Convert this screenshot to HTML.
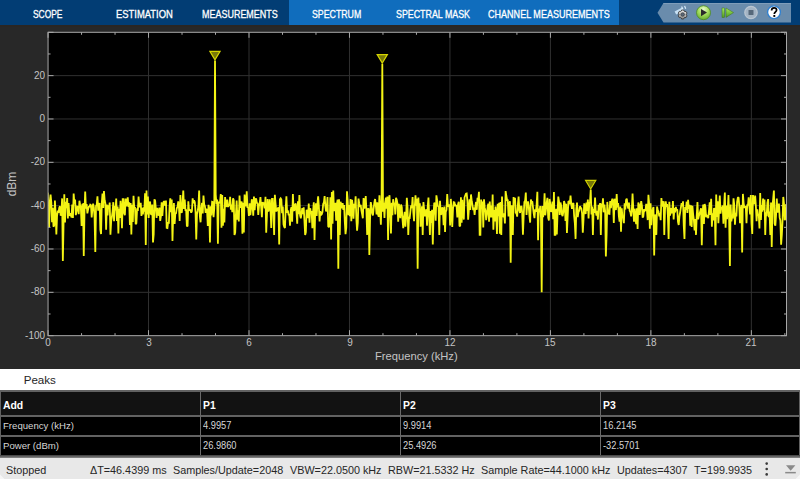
<!DOCTYPE html>
<html><head><meta charset="utf-8">
<style>
*{margin:0;padding:0;box-sizing:border-box}
html,body{width:800px;height:479px;overflow:hidden;background:#282828;font-family:"Liberation Sans",sans-serif}
.abs{position:absolute}
#tb{position:absolute;left:0;top:0;width:800px;height:25px;background:#023d74}
#tbsel{position:absolute;left:289px;top:0;width:330px;height:25px;background:#106dbd}
.tab{position:absolute;top:7px;height:14px;line-height:14px;color:#fff;font-size:10.6px;-webkit-text-stroke:0.3px #fff;white-space:nowrap;transform-origin:0 50%}
#strip{position:absolute;left:0;top:25px;width:800px;height:2px;background:#2a2623}
#plot{position:absolute;left:0;top:27px;width:800px;height:342px;background:#282828}
.yl{position:absolute;left:0;width:45px;text-align:right;font-size:11.3px;line-height:14px;color:#c4c4c4;transform:scaleX(0.88);transform-origin:100% 50%}
.xl{position:absolute;top:336px;width:30px;text-align:center;font-size:11.3px;line-height:12px;color:#c4c4c4;transform:scaleX(0.88)}
#peaks{position:absolute;left:0;top:369px;width:800px;height:22px;background:#fff}
.th{position:absolute;top:398.5px;color:#fff;font-weight:bold;font-size:10.4px;line-height:14px;white-space:nowrap}
.td{position:absolute;color:#d6d6d6;font-size:9.6px;line-height:12px;white-space:nowrap}
.r2{top:420px} .r3{top:440px}
.dg{display:inline-block;font-size:10.3px;transform:scaleX(0.9);transform-origin:0 50%;position:relative;top:-0.5px}
#status{position:absolute;left:0;top:458px;width:800px;height:21px;background:#e8e8e8}
.st{position:absolute;top:5px;font-size:10.8px;line-height:14px;color:#262626;white-space:nowrap}
</style></head><body>
<div id="plot"></div>
<div id="tb"></div>
<div id="tbsel"></div>
<div class="tab" style="left:33px;transform:scaleX(0.795)">SCOPE</div>
<div class="tab" style="left:116px;transform:scaleX(0.889)">ESTIMATION</div>
<div class="tab" style="left:202px;transform:scaleX(0.847)">MEASUREMENTS</div>
<div class="tab" style="left:312px;transform:scaleX(0.829)">SPECTRUM</div>
<div class="tab" style="left:396px;transform:scaleX(0.836)">SPECTRAL MASK</div>
<div class="tab" style="left:488px;transform:scaleX(0.853)">CHANNEL MEASUREMENTS</div>
<svg class="abs" style="left:0;top:0" width="800" height="30" viewBox="0 0 800 30">
<defs>
<radialGradient id="gp" cx="0.5" cy="0.25" r="0.8"><stop offset="0" stop-color="#e8f8d0"/><stop offset="0.45" stop-color="#a8e060"/><stop offset="1" stop-color="#5ea82a"/></radialGradient>
<linearGradient id="gg" x1="0" y1="0" x2="0" y2="1"><stop offset="0" stop-color="#f0f0f0"/><stop offset="1" stop-color="#8a8a8a"/></linearGradient>
<linearGradient id="gs" x1="0" y1="0" x2="0" y2="1"><stop offset="0" stop-color="#a6ed5c"/><stop offset="1" stop-color="#4f9a22"/></linearGradient>
</defs>
<polygon points="663.5,3 657.5,12.75 663.5,22.5 791,22.5 791,3" fill="#6a8cac"/>
<line x1="663.5" y1="3.5" x2="791" y2="3.5" stroke="#7f9dba" stroke-width="1"/>
<path d="M674.6,11.6 L682.2,7.6 L684.0,10.6 L676.2,14.4 Z" fill="#c6e0f4"/>
<path d="M681.6,6.6 L682.9,9.2 M684.6,5.9 L685.7,8.8" stroke="#d8ecfb" stroke-width="1.2"/>
<path d="M681.62,10.02 L683.68,10.02 L684.04,11.07 L684.93,11.58 L686.01,11.36 L687.05,13.16 L686.31,13.99 L686.31,15.01 L687.05,15.84 L686.01,17.64 L684.93,17.42 L684.04,17.93 L683.68,18.98 L681.62,18.98 L681.26,17.93 L680.37,17.42 L679.29,17.64 L678.25,15.84 L678.99,15.01 L678.99,13.99 L678.25,13.16 L679.29,11.36 L680.37,11.58 L681.26,11.07 Z" fill="url(#gg)" stroke="#3a3a3a" stroke-width="0.9" stroke-linejoin="round"/>
<circle cx="682.65" cy="14.5" r="1.8" fill="#5a6878" stroke="#2e2e2e" stroke-width="0.6"/>
<circle cx="703.5" cy="12.7" r="7" fill="url(#gp)" stroke="#4a8a22" stroke-width="0.8"/>
<path d="M701,9 L707,12.6 L701,16.2 Z" fill="#2a2a2a"/>
<rect x="722" y="8" width="2.6" height="9.5" fill="url(#gs)" stroke="#3f6f1f" stroke-width="0.5"/>
<path d="M726,8 L733.5,12.6 L726,17.4 Z" fill="url(#gs)" stroke="#3f6f1f" stroke-width="0.5"/>
<circle cx="751" cy="12.5" r="6.2" fill="#a4b4c4" stroke="#b9c5d1" stroke-width="1.3"/>
<rect x="748.5" y="10" width="5" height="5" rx="0.6" fill="#56687a"/>
<circle cx="774" cy="12.2" r="6.4" fill="#ffffff" stroke="#2f80d0" stroke-width="1.3"/>
<path d="M771.6,10.4 C771.6,8.6 772.8,7.9 774.1,7.9 C775.6,7.9 776.6,8.8 776.6,10.1 C776.6,11.7 774.3,12 774.3,13.9" fill="none" stroke="#000" stroke-width="1.7"/><rect x="773.35" y="15.0" width="1.9" height="1.9" fill="#000"/>
</svg>
<div id="strip"></div>
<svg class="abs" style="left:0;top:0" width="800" height="369" viewBox="0 0 800 369">
<rect x="48.06" y="32.3" width="738.44" height="303.36" fill="#000"/>
<line x1="148.53" y1="32.3" x2="148.53" y2="335.66" stroke="#303030" stroke-width="1"/><line x1="249.00" y1="32.3" x2="249.00" y2="335.66" stroke="#303030" stroke-width="1"/><line x1="349.47" y1="32.3" x2="349.47" y2="335.66" stroke="#303030" stroke-width="1"/><line x1="449.94" y1="32.3" x2="449.94" y2="335.66" stroke="#303030" stroke-width="1"/><line x1="550.41" y1="32.3" x2="550.41" y2="335.66" stroke="#303030" stroke-width="1"/><line x1="650.88" y1="32.3" x2="650.88" y2="335.66" stroke="#303030" stroke-width="1"/><line x1="751.35" y1="32.3" x2="751.35" y2="335.66" stroke="#303030" stroke-width="1"/><line x1="48.06" y1="292.32" x2="786.5" y2="292.32" stroke="#303030" stroke-width="1"/><line x1="48.06" y1="248.99" x2="786.5" y2="248.99" stroke="#303030" stroke-width="1"/><line x1="48.06" y1="205.65" x2="786.5" y2="205.65" stroke="#303030" stroke-width="1"/><line x1="48.06" y1="162.32" x2="786.5" y2="162.32" stroke="#303030" stroke-width="1"/><line x1="48.06" y1="118.98" x2="786.5" y2="118.98" stroke="#303030" stroke-width="1"/><line x1="48.06" y1="75.64" x2="786.5" y2="75.64" stroke="#303030" stroke-width="1"/><line x1="48.06" y1="330.16" x2="48.06" y2="335.66" stroke="#a8a8a8" stroke-width="1"/><line x1="48.06" y1="32.3" x2="48.06" y2="37.80" stroke="#a8a8a8" stroke-width="1"/><line x1="81.55" y1="333.16" x2="81.55" y2="335.66" stroke="#a8a8a8" stroke-width="1"/><line x1="81.55" y1="32.3" x2="81.55" y2="34.80" stroke="#a8a8a8" stroke-width="1"/><line x1="115.04" y1="333.16" x2="115.04" y2="335.66" stroke="#a8a8a8" stroke-width="1"/><line x1="115.04" y1="32.3" x2="115.04" y2="34.80" stroke="#a8a8a8" stroke-width="1"/><line x1="148.53" y1="330.16" x2="148.53" y2="335.66" stroke="#a8a8a8" stroke-width="1"/><line x1="148.53" y1="32.3" x2="148.53" y2="37.80" stroke="#a8a8a8" stroke-width="1"/><line x1="182.02" y1="333.16" x2="182.02" y2="335.66" stroke="#a8a8a8" stroke-width="1"/><line x1="182.02" y1="32.3" x2="182.02" y2="34.80" stroke="#a8a8a8" stroke-width="1"/><line x1="215.51" y1="333.16" x2="215.51" y2="335.66" stroke="#a8a8a8" stroke-width="1"/><line x1="215.51" y1="32.3" x2="215.51" y2="34.80" stroke="#a8a8a8" stroke-width="1"/><line x1="249.00" y1="330.16" x2="249.00" y2="335.66" stroke="#a8a8a8" stroke-width="1"/><line x1="249.00" y1="32.3" x2="249.00" y2="37.80" stroke="#a8a8a8" stroke-width="1"/><line x1="282.49" y1="333.16" x2="282.49" y2="335.66" stroke="#a8a8a8" stroke-width="1"/><line x1="282.49" y1="32.3" x2="282.49" y2="34.80" stroke="#a8a8a8" stroke-width="1"/><line x1="315.98" y1="333.16" x2="315.98" y2="335.66" stroke="#a8a8a8" stroke-width="1"/><line x1="315.98" y1="32.3" x2="315.98" y2="34.80" stroke="#a8a8a8" stroke-width="1"/><line x1="349.47" y1="330.16" x2="349.47" y2="335.66" stroke="#a8a8a8" stroke-width="1"/><line x1="349.47" y1="32.3" x2="349.47" y2="37.80" stroke="#a8a8a8" stroke-width="1"/><line x1="382.96" y1="333.16" x2="382.96" y2="335.66" stroke="#a8a8a8" stroke-width="1"/><line x1="382.96" y1="32.3" x2="382.96" y2="34.80" stroke="#a8a8a8" stroke-width="1"/><line x1="416.45" y1="333.16" x2="416.45" y2="335.66" stroke="#a8a8a8" stroke-width="1"/><line x1="416.45" y1="32.3" x2="416.45" y2="34.80" stroke="#a8a8a8" stroke-width="1"/><line x1="449.94" y1="330.16" x2="449.94" y2="335.66" stroke="#a8a8a8" stroke-width="1"/><line x1="449.94" y1="32.3" x2="449.94" y2="37.80" stroke="#a8a8a8" stroke-width="1"/><line x1="483.43" y1="333.16" x2="483.43" y2="335.66" stroke="#a8a8a8" stroke-width="1"/><line x1="483.43" y1="32.3" x2="483.43" y2="34.80" stroke="#a8a8a8" stroke-width="1"/><line x1="516.92" y1="333.16" x2="516.92" y2="335.66" stroke="#a8a8a8" stroke-width="1"/><line x1="516.92" y1="32.3" x2="516.92" y2="34.80" stroke="#a8a8a8" stroke-width="1"/><line x1="550.41" y1="330.16" x2="550.41" y2="335.66" stroke="#a8a8a8" stroke-width="1"/><line x1="550.41" y1="32.3" x2="550.41" y2="37.80" stroke="#a8a8a8" stroke-width="1"/><line x1="583.90" y1="333.16" x2="583.90" y2="335.66" stroke="#a8a8a8" stroke-width="1"/><line x1="583.90" y1="32.3" x2="583.90" y2="34.80" stroke="#a8a8a8" stroke-width="1"/><line x1="617.39" y1="333.16" x2="617.39" y2="335.66" stroke="#a8a8a8" stroke-width="1"/><line x1="617.39" y1="32.3" x2="617.39" y2="34.80" stroke="#a8a8a8" stroke-width="1"/><line x1="650.88" y1="330.16" x2="650.88" y2="335.66" stroke="#a8a8a8" stroke-width="1"/><line x1="650.88" y1="32.3" x2="650.88" y2="37.80" stroke="#a8a8a8" stroke-width="1"/><line x1="684.37" y1="333.16" x2="684.37" y2="335.66" stroke="#a8a8a8" stroke-width="1"/><line x1="684.37" y1="32.3" x2="684.37" y2="34.80" stroke="#a8a8a8" stroke-width="1"/><line x1="717.86" y1="333.16" x2="717.86" y2="335.66" stroke="#a8a8a8" stroke-width="1"/><line x1="717.86" y1="32.3" x2="717.86" y2="34.80" stroke="#a8a8a8" stroke-width="1"/><line x1="751.35" y1="330.16" x2="751.35" y2="335.66" stroke="#a8a8a8" stroke-width="1"/><line x1="751.35" y1="32.3" x2="751.35" y2="37.80" stroke="#a8a8a8" stroke-width="1"/><line x1="784.84" y1="333.16" x2="784.84" y2="335.66" stroke="#a8a8a8" stroke-width="1"/><line x1="784.84" y1="32.3" x2="784.84" y2="34.80" stroke="#a8a8a8" stroke-width="1"/><line x1="48.06" y1="335.66" x2="53.56" y2="335.66" stroke="#a8a8a8" stroke-width="1"/><line x1="781.00" y1="335.66" x2="786.5" y2="335.66" stroke="#a8a8a8" stroke-width="1"/><line x1="48.06" y1="313.99" x2="50.56" y2="313.99" stroke="#a8a8a8" stroke-width="1"/><line x1="784.00" y1="313.99" x2="786.5" y2="313.99" stroke="#a8a8a8" stroke-width="1"/><line x1="48.06" y1="292.32" x2="53.56" y2="292.32" stroke="#a8a8a8" stroke-width="1"/><line x1="781.00" y1="292.32" x2="786.5" y2="292.32" stroke="#a8a8a8" stroke-width="1"/><line x1="48.06" y1="270.66" x2="50.56" y2="270.66" stroke="#a8a8a8" stroke-width="1"/><line x1="784.00" y1="270.66" x2="786.5" y2="270.66" stroke="#a8a8a8" stroke-width="1"/><line x1="48.06" y1="248.99" x2="53.56" y2="248.99" stroke="#a8a8a8" stroke-width="1"/><line x1="781.00" y1="248.99" x2="786.5" y2="248.99" stroke="#a8a8a8" stroke-width="1"/><line x1="48.06" y1="227.32" x2="50.56" y2="227.32" stroke="#a8a8a8" stroke-width="1"/><line x1="784.00" y1="227.32" x2="786.5" y2="227.32" stroke="#a8a8a8" stroke-width="1"/><line x1="48.06" y1="205.65" x2="53.56" y2="205.65" stroke="#a8a8a8" stroke-width="1"/><line x1="781.00" y1="205.65" x2="786.5" y2="205.65" stroke="#a8a8a8" stroke-width="1"/><line x1="48.06" y1="183.98" x2="50.56" y2="183.98" stroke="#a8a8a8" stroke-width="1"/><line x1="784.00" y1="183.98" x2="786.5" y2="183.98" stroke="#a8a8a8" stroke-width="1"/><line x1="48.06" y1="162.32" x2="53.56" y2="162.32" stroke="#a8a8a8" stroke-width="1"/><line x1="781.00" y1="162.32" x2="786.5" y2="162.32" stroke="#a8a8a8" stroke-width="1"/><line x1="48.06" y1="140.65" x2="50.56" y2="140.65" stroke="#a8a8a8" stroke-width="1"/><line x1="784.00" y1="140.65" x2="786.5" y2="140.65" stroke="#a8a8a8" stroke-width="1"/><line x1="48.06" y1="118.98" x2="53.56" y2="118.98" stroke="#a8a8a8" stroke-width="1"/><line x1="781.00" y1="118.98" x2="786.5" y2="118.98" stroke="#a8a8a8" stroke-width="1"/><line x1="48.06" y1="97.31" x2="50.56" y2="97.31" stroke="#a8a8a8" stroke-width="1"/><line x1="784.00" y1="97.31" x2="786.5" y2="97.31" stroke="#a8a8a8" stroke-width="1"/><line x1="48.06" y1="75.64" x2="53.56" y2="75.64" stroke="#a8a8a8" stroke-width="1"/><line x1="781.00" y1="75.64" x2="786.5" y2="75.64" stroke="#a8a8a8" stroke-width="1"/><line x1="48.06" y1="53.98" x2="50.56" y2="53.98" stroke="#a8a8a8" stroke-width="1"/><line x1="784.00" y1="53.98" x2="786.5" y2="53.98" stroke="#a8a8a8" stroke-width="1"/><line x1="48.06" y1="32.31" x2="53.56" y2="32.31" stroke="#a8a8a8" stroke-width="1"/><line x1="781.00" y1="32.31" x2="786.5" y2="32.31" stroke="#a8a8a8" stroke-width="1"/>
<svg x="48.06" y="32.3" width="738.44" height="303.36" viewBox="48.06 32.3 738.44 303.36" overflow="hidden">
<polyline points="47.70,192.65 48.42,214.32 49.14,227.08 49.86,200.95 50.58,194.56 51.31,202.68 52.03,222.11 52.75,207.88 53.47,226.77 54.19,225.21 54.91,200.64 55.63,214.16 56.35,234.50 57.07,215.83 57.80,210.62 58.52,212.95 59.24,207.80 59.96,206.23 60.68,215.77 61.40,212.62 62.12,198.42 62.84,261.00 63.57,223.04 64.29,194.33 65.01,222.41 65.73,201.71 66.45,208.18 67.17,198.05 67.89,218.49 68.61,202.97 69.33,215.09 70.06,215.37 70.78,213.18 71.50,217.58 72.22,204.52 72.94,217.95 73.66,193.59 74.38,203.51 75.10,199.52 75.82,215.10 76.55,211.04 77.27,206.55 77.99,206.96 78.71,214.27 79.43,200.77 80.15,205.01 80.87,208.13 81.59,225.86 82.32,204.47 83.04,204.14 83.76,256.00 84.48,211.80 85.20,191.64 85.92,208.57 86.64,204.10 87.36,213.36 88.08,209.64 88.81,206.78 89.53,206.58 90.25,204.63 90.97,205.15 91.69,217.55 92.41,208.81 93.13,203.72 93.85,207.25 94.57,217.53 95.30,252.00 96.02,205.98 96.74,204.65 97.46,196.31 98.18,210.67 98.90,207.47 99.62,202.91 100.34,229.71 101.06,234.00 101.79,203.29 102.51,193.50 103.23,208.04 103.95,191.13 104.67,200.29 105.39,203.30 106.11,229.74 106.83,204.55 107.56,215.50 108.28,205.32 109.00,208.18 109.72,202.60 110.44,234.70 111.16,221.42 111.88,217.01 112.60,211.26 113.32,202.17 114.05,221.24 114.77,206.16 115.49,210.26 116.21,198.57 116.93,220.95 117.65,206.64 118.37,233.51 119.09,208.81 119.81,217.91 120.54,200.72 121.26,209.47 121.98,228.31 122.70,199.14 123.42,199.18 124.14,213.11 124.86,215.21 125.58,198.57 126.31,206.33 127.03,202.12 127.75,197.40 128.47,206.95 129.19,202.26 129.91,224.90 130.63,203.11 131.35,234.37 132.07,204.83 132.80,221.97 133.52,195.86 134.24,207.88 134.96,207.04 135.68,224.11 136.40,223.13 137.12,208.38 137.84,210.95 138.56,196.58 139.29,206.67 140.01,206.51 140.73,202.84 141.45,216.01 142.17,207.79 142.89,214.46 143.61,207.45 144.33,211.65 145.05,193.22 145.78,245.00 146.50,190.48 147.22,214.37 147.94,196.59 148.66,218.01 149.38,205.11 150.10,201.54 150.82,213.90 151.55,214.62 152.27,204.53 152.99,242.50 153.71,234.21 154.43,199.31 155.15,200.66 155.87,209.08 156.59,217.99 157.31,207.85 158.04,215.30 158.76,214.75 159.48,207.59 160.20,220.95 160.92,216.28 161.64,202.42 162.36,215.93 163.08,205.90 163.80,201.05 164.53,202.34 165.25,205.93 165.97,200.55 166.69,227.82 167.41,228.05 168.13,222.03 168.85,223.66 169.57,206.85 170.29,198.31 171.02,212.09 171.74,199.48 172.46,241.00 173.18,215.27 173.90,203.00 174.62,223.97 175.34,213.65 176.06,213.28 176.79,208.12 177.51,207.14 178.23,201.33 178.95,207.54 179.67,221.01 180.39,195.05 181.11,211.92 181.83,212.80 182.55,202.68 183.28,190.48 184.00,208.92 184.72,199.48 185.44,210.15 186.16,210.10 186.88,226.37 187.60,225.74 188.32,201.29 189.04,210.62 189.77,209.30 190.49,210.69 191.21,212.65 191.93,211.14 192.65,198.35 193.37,203.33 194.09,200.31 194.81,202.14 195.54,211.78 196.26,239.50 196.98,214.33 197.70,210.97 198.42,206.26 199.14,190.48 199.86,216.35 200.58,222.29 201.30,209.15 202.03,202.95 202.75,213.34 203.47,195.51 204.19,204.29 204.91,206.14 205.63,212.91 206.35,208.69 207.07,210.69 207.79,225.90 208.52,204.82 209.24,211.08 209.96,242.50 210.68,206.27 211.40,215.33 212.12,201.86 212.84,202.20 213.56,217.15 214.28,208.10 215.01,60.51 215.73,194.56 216.45,204.29 217.17,199.50 217.89,243.75 218.61,202.42 219.33,202.67 220.05,202.15 220.78,194.03 221.50,227.77 222.22,195.04 222.94,225.80 223.66,208.77 224.38,222.44 225.10,196.99 225.82,206.65 226.54,206.07 227.27,199.52 227.99,207.11 228.71,204.62 229.43,205.89 230.15,196.91 230.87,209.71 231.59,204.47 232.31,212.29 233.03,198.38 233.76,200.17 234.48,234.90 235.20,232.67 235.92,214.33 236.64,200.62 237.36,219.77 238.08,210.35 238.80,221.46 239.53,195.56 240.25,207.80 240.97,203.87 241.69,201.44 242.41,233.75 243.13,202.89 243.85,232.43 244.57,194.55 245.29,205.77 246.02,205.62 246.74,191.31 247.46,207.89 248.18,207.20 248.90,216.00 249.62,203.20 250.34,215.13 251.06,208.33 251.78,199.20 252.51,204.39 253.23,215.67 253.95,196.56 254.67,210.14 255.39,200.17 256.11,198.42 256.83,202.91 257.55,203.23 258.27,214.84 259.00,205.92 259.72,203.27 260.44,197.09 261.16,207.13 261.88,217.14 262.60,202.16 263.32,204.16 264.04,202.29 264.77,208.34 265.49,196.80 266.21,232.68 266.93,214.86 267.65,199.14 268.37,211.61 269.09,208.86 269.81,199.28 270.53,210.01 271.26,228.04 271.98,198.99 272.70,198.97 273.42,212.52 274.14,234.90 274.86,194.77 275.58,203.72 276.30,211.39 277.02,210.21 277.75,208.48 278.47,207.38 279.19,244.50 279.91,199.28 280.63,198.33 281.35,199.58 282.07,213.21 282.79,206.61 283.52,224.47 284.24,226.94 284.96,228.06 285.68,208.70 286.40,196.24 287.12,212.82 287.84,210.35 288.56,214.68 289.28,214.77 290.01,225.81 290.73,210.12 291.45,207.15 292.17,221.74 292.89,194.09 293.61,210.13 294.33,210.67 295.05,204.62 295.77,203.62 296.50,212.75 297.22,223.71 297.94,201.38 298.66,214.24 299.38,195.14 300.10,215.37 300.82,218.24 301.54,213.69 302.26,208.13 302.99,214.23 303.71,207.31 304.43,220.55 305.15,234.90 305.87,232.18 306.59,209.76 307.31,213.87 308.03,218.10 308.76,203.61 309.48,222.82 310.20,208.24 310.92,213.15 311.64,211.16 312.36,228.20 313.08,212.15 313.80,202.29 314.52,240.00 315.25,209.23 315.97,203.30 316.69,215.96 317.41,204.03 318.13,196.22 318.85,206.13 319.57,221.35 320.29,211.05 321.01,214.98 321.74,214.35 322.46,212.14 323.18,204.05 323.90,202.40 324.62,195.99 325.34,205.80 326.06,211.48 326.78,208.19 327.51,197.08 328.23,226.50 328.95,227.25 329.67,223.91 330.39,197.20 331.11,239.50 331.83,191.98 332.55,223.83 333.27,190.48 334.00,211.01 334.72,207.68 335.44,202.77 336.16,220.79 336.88,204.53 337.60,199.58 338.32,268.75 339.04,199.24 339.76,234.90 340.49,201.88 341.21,204.01 341.93,208.40 342.65,203.13 343.37,209.98 344.09,205.01 344.81,221.61 345.53,234.25 346.25,227.80 346.98,191.30 347.70,200.51 348.42,215.15 349.14,204.95 349.86,216.26 350.58,199.12 351.30,221.33 352.02,199.79 352.75,206.03 353.47,218.75 354.19,203.80 354.91,208.17 355.63,196.20 356.35,218.79 357.07,230.65 357.79,222.96 358.51,198.53 359.24,203.48 359.96,207.07 360.68,204.95 361.40,210.40 362.12,214.03 362.84,218.33 363.56,198.00 364.28,208.53 365.00,205.70 365.73,196.02 366.45,211.59 367.17,234.90 367.89,208.98 368.61,208.46 369.33,255.00 370.05,219.80 370.77,202.08 371.49,206.08 372.22,213.37 372.94,215.34 373.66,208.39 374.38,202.42 375.10,199.05 375.82,205.27 376.54,214.37 377.26,202.39 377.99,213.99 378.71,216.71 379.43,195.23 380.15,210.38 380.87,224.70 381.59,199.06 382.31,63.74 383.03,211.75 383.75,202.79 384.48,218.06 385.20,202.22 385.92,197.54 386.64,208.74 387.36,196.63 388.08,240.00 388.80,200.41 389.52,195.24 390.24,215.48 390.97,233.45 391.69,202.89 392.41,215.22 393.13,199.19 393.85,203.88 394.57,203.05 395.29,214.38 396.01,197.87 396.74,199.68 397.46,203.67 398.18,221.77 398.90,203.71 399.62,212.64 400.34,218.18 401.06,204.52 401.78,207.13 402.50,219.25 403.23,228.12 403.95,218.27 404.67,211.91 405.39,226.62 406.11,217.40 406.83,197.87 407.55,208.05 408.27,234.90 408.99,217.75 409.72,217.95 410.44,210.94 411.16,205.35 411.88,207.96 412.60,197.05 413.32,212.79 414.04,221.19 414.76,206.86 415.48,195.27 416.21,205.67 416.93,198.69 417.65,268.75 418.37,197.46 419.09,211.27 419.81,203.36 420.53,226.75 421.25,217.24 421.98,206.23 422.70,234.90 423.42,202.10 424.14,209.44 424.86,216.42 425.58,213.27 426.30,209.25 427.02,225.81 427.74,206.00 428.47,197.63 429.19,217.10 429.91,234.90 430.63,210.98 431.35,222.89 432.07,209.81 432.79,244.50 433.51,215.35 434.23,202.75 434.96,203.60 435.68,220.64 436.40,195.29 437.12,200.19 437.84,206.01 438.56,206.74 439.28,234.90 440.00,200.75 440.73,214.75 441.45,213.84 442.17,207.31 442.89,210.29 443.61,225.20 444.33,206.62 445.05,232.07 445.77,212.08 446.49,209.82 447.22,194.09 447.94,206.67 448.66,205.91 449.38,204.46 450.10,225.53 450.82,198.92 451.54,210.39 452.26,227.00 452.98,209.22 453.71,202.20 454.43,202.50 455.15,205.66 455.87,205.47 456.59,205.83 457.31,217.50 458.03,204.47 458.75,201.84 459.47,225.68 460.20,226.17 460.92,197.35 461.64,222.66 462.36,199.75 463.08,211.71 463.80,219.59 464.52,197.55 465.24,195.52 465.97,193.80 466.69,193.57 467.41,200.83 468.13,219.65 468.85,209.91 469.57,199.38 470.29,210.06 471.01,194.45 471.73,201.25 472.46,204.84 473.18,210.23 473.90,207.65 474.62,214.96 475.34,206.62 476.06,202.00 476.78,209.81 477.50,197.91 478.22,200.16 478.95,191.83 479.67,234.90 480.39,234.90 481.11,199.50 481.83,208.13 482.55,201.50 483.27,227.56 483.99,199.23 484.72,207.67 485.44,210.70 486.16,220.19 486.88,214.56 487.60,207.00 488.32,203.64 489.04,221.60 489.76,201.53 490.48,217.48 491.21,205.48 491.93,217.46 492.65,194.43 493.37,229.75 494.09,210.08 494.81,221.47 495.53,206.46 496.25,215.62 496.97,233.95 497.70,203.72 498.42,216.21 499.14,202.74 499.86,233.71 500.58,201.94 501.30,235.10 502.02,196.43 502.74,216.86 503.46,216.28 504.19,213.36 504.91,223.39 505.63,191.01 506.35,196.02 507.07,199.98 507.79,200.13 508.51,216.51 509.23,204.69 509.96,201.30 510.68,262.70 511.40,205.96 512.12,206.07 512.84,234.90 513.56,197.09 514.28,200.17 515.00,197.70 515.72,212.71 516.45,213.27 517.17,216.65 517.89,204.38 518.61,196.55 519.33,210.21 520.05,212.96 520.77,206.90 521.49,206.00 522.21,212.81 522.94,234.82 523.66,215.97 524.38,201.90 525.10,200.71 525.82,192.56 526.54,214.85 527.26,204.12 527.98,201.49 528.71,206.15 529.43,215.96 530.15,222.64 530.87,199.57 531.59,202.28 532.31,201.46 533.03,207.69 533.75,213.59 534.47,218.07 535.20,209.32 535.92,211.72 536.64,204.22 537.36,191.72 538.08,240.20 538.80,208.46 539.52,212.17 540.24,206.15 540.96,217.64 541.69,292.30 542.41,206.09 543.13,217.11 543.85,211.39 544.57,193.26 545.29,215.32 546.01,208.81 546.73,202.33 547.45,197.83 548.18,217.64 548.90,220.42 549.62,198.95 550.34,204.67 551.06,211.91 551.78,209.00 552.50,201.55 553.22,219.31 553.95,192.10 554.67,234.90 555.39,234.90 556.11,208.66 556.83,234.59 557.55,212.68 558.27,196.57 558.99,201.30 559.71,214.85 560.44,202.54 561.16,205.66 561.88,214.27 562.60,216.04 563.32,211.79 564.04,200.98 564.76,203.75 565.48,220.94 566.20,203.81 566.93,233.01 567.65,216.69 568.37,201.73 569.09,201.04 569.81,204.39 570.53,195.59 571.25,203.91 571.97,208.77 572.69,203.72 573.42,203.15 574.14,216.00 574.86,223.44 575.58,238.90 576.30,209.43 577.02,202.56 577.74,217.23 578.46,212.18 579.19,210.65 579.91,206.30 580.63,207.64 581.35,208.55 582.07,213.35 582.79,232.81 583.51,219.45 584.23,203.36 584.95,208.97 585.68,214.03 586.40,202.44 587.12,210.83 587.84,199.65 588.56,218.57 589.28,202.75 590.00,202.24 590.72,189.55 591.44,214.48 592.17,206.59 592.89,234.90 593.61,208.74 594.33,212.95 595.05,197.62 595.77,211.64 596.49,215.58 597.21,210.90 597.94,219.55 598.66,204.88 599.38,207.42 600.10,203.06 600.82,234.90 601.54,203.56 602.26,207.22 602.98,198.23 603.70,212.32 604.43,204.65 605.15,211.35 605.87,256.40 606.59,234.90 607.31,201.90 608.03,212.11 608.75,213.77 609.47,213.94 610.19,201.15 610.92,208.25 611.64,201.73 612.36,198.69 613.08,203.12 613.80,222.97 614.52,198.67 615.24,203.10 615.96,210.05 616.68,193.99 617.41,207.27 618.13,203.06 618.85,215.98 619.57,221.60 620.29,206.43 621.01,231.77 621.73,208.38 622.45,216.78 623.18,217.26 623.90,223.17 624.62,203.36 625.34,209.53 626.06,200.07 626.78,198.55 627.50,205.02 628.22,208.57 628.94,202.60 629.67,210.70 630.39,212.19 631.11,216.39 631.83,209.74 632.55,193.64 633.27,208.57 633.99,221.82 634.71,208.69 635.43,218.53 636.16,224.02 636.88,208.30 637.60,228.96 638.32,202.53 639.04,204.57 639.76,215.04 640.48,207.24 641.20,201.08 641.93,205.95 642.65,217.60 643.37,216.21 644.09,208.98 644.81,210.79 645.53,209.91 646.25,203.90 646.97,210.89 647.69,220.08 648.42,194.79 649.14,203.49 649.86,228.61 650.58,203.34 651.30,225.17 652.02,211.17 652.74,209.32 653.46,207.11 654.18,255.50 654.91,214.58 655.63,215.88 656.35,234.90 657.07,206.58 657.79,210.34 658.51,211.46 659.23,216.25 659.95,213.06 660.67,220.27 661.40,198.02 662.12,205.91 662.84,205.80 663.56,201.19 664.28,234.90 665.00,209.90 665.72,201.45 666.44,206.69 667.17,204.02 667.89,215.65 668.61,238.90 669.33,201.71 670.05,215.58 670.77,211.07 671.49,208.23 672.21,213.42 672.93,201.04 673.66,219.48 674.38,208.09 675.10,212.48 675.82,206.95 676.54,210.25 677.26,209.25 677.98,221.99 678.70,224.98 679.42,216.67 680.15,212.25 680.87,207.60 681.59,203.26 682.31,206.27 683.03,201.31 683.75,225.58 684.47,238.90 685.19,206.95 685.92,209.72 686.64,201.69 687.36,213.04 688.08,199.77 688.80,208.83 689.52,204.70 690.24,225.61 690.96,205.18 691.68,226.93 692.41,205.72 693.13,214.36 693.85,219.79 694.57,230.37 695.29,219.14 696.01,234.90 696.73,215.78 697.45,202.16 698.17,219.34 698.90,215.91 699.62,213.61 700.34,210.84 701.06,208.25 701.78,245.30 702.50,215.34 703.22,204.45 703.94,223.87 704.66,204.08 705.39,206.88 706.11,217.15 706.83,215.65 707.55,216.50 708.27,218.13 708.99,210.43 709.71,202.28 710.43,214.91 711.16,198.89 711.88,226.70 712.60,213.28 713.32,220.52 714.04,208.11 714.76,209.89 715.48,245.30 716.20,194.42 716.92,216.99 717.65,201.39 718.37,223.16 719.09,209.96 719.81,195.52 720.53,213.61 721.25,207.32 721.97,208.53 722.69,205.55 723.41,223.82 724.14,205.02 724.86,192.43 725.58,227.67 726.30,205.46 727.02,219.26 727.74,210.71 728.46,195.03 729.18,221.42 729.91,266.00 730.63,204.53 731.35,221.34 732.07,217.01 732.79,218.57 733.51,198.30 734.23,204.46 734.95,224.69 735.67,212.79 736.40,216.37 737.12,201.88 737.84,197.77 738.56,197.22 739.28,206.30 740.00,223.10 740.72,210.98 741.44,204.97 742.16,252.40 742.89,193.94 743.61,203.04 744.33,207.30 745.05,207.23 745.77,206.36 746.49,223.13 747.21,204.64 747.93,205.47 748.65,197.44 749.38,207.03 750.10,214.46 750.82,195.11 751.54,223.49 752.26,234.03 752.98,194.98 753.70,204.16 754.42,202.25 755.15,195.65 755.87,206.13 756.59,221.30 757.31,209.37 758.03,215.63 758.75,214.26 759.47,228.51 760.19,192.96 760.91,220.01 761.64,205.11 762.36,211.65 763.08,198.67 763.80,210.11 764.52,199.51 765.24,234.90 765.96,212.34 766.68,216.13 767.40,202.79 768.13,199.05 768.85,217.31 769.57,211.48 770.29,234.90 771.01,202.56 771.73,247.00 772.45,206.42 773.17,199.17 773.90,190.48 774.62,223.69 775.34,225.68 776.06,215.16 776.78,198.61 777.50,212.53 778.22,210.26 778.94,203.50 779.66,217.40 780.39,220.62 781.11,244.60 781.83,234.90 782.55,220.49 783.27,196.93 783.99,203.90 784.71,220.18 785.43,218.78 786.15,204.03" fill="none" stroke="#f4f414" stroke-width="1.8" stroke-linejoin="miter" stroke-miterlimit="2"/>
<polygon points="209.87,51.41 220.07,51.41 214.97,59.91" fill="#787808" stroke="#d4d400" stroke-width="1.2" stroke-linejoin="miter"/><polygon points="377.17,54.64 387.37,54.64 382.27,63.14" fill="#787808" stroke="#d4d400" stroke-width="1.2" stroke-linejoin="miter"/><polygon points="585.58,180.45 595.78,180.45 590.68,188.95" fill="#787808" stroke="#d4d400" stroke-width="1.2" stroke-linejoin="miter"/>
</svg>
<rect x="48.06" y="32.3" width="738.44" height="303.36" fill="none" stroke="#a8a8a8" stroke-width="1"/>
</svg>
<div class="yl" style="top:67.6px">20</div><div class="yl" style="top:111.0px">0</div><div class="yl" style="top:154.3px">-20</div><div class="yl" style="top:197.7px">-40</div><div class="yl" style="top:241.0px">-60</div><div class="yl" style="top:284.3px">-80</div><div class="yl" style="top:327.7px">-100</div>
<div class="xl" style="left:33.1px">0</div><div class="xl" style="left:133.5px">3</div><div class="xl" style="left:234.0px">6</div><div class="xl" style="left:334.5px">9</div><div class="xl" style="left:434.9px">12</div><div class="xl" style="left:535.4px">15</div><div class="xl" style="left:635.9px">18</div><div class="xl" style="left:736.4px">21</div>
<div class="abs" style="left:375px;top:350px;font-size:11.2px;line-height:13px;color:#c4c4c4;white-space:nowrap">Frequency (kHz)</div>
<div class="abs" style="left:5px;top:184px;width:0;height:0"><div style="position:absolute;left:0;top:0;transform:translate(-50%,-50%) rotate(-90deg);font-size:12px;line-height:13px;color:#c4c4c4;white-space:nowrap;transform-origin:50% 50%;margin-left:6.5px">dBm</div></div>
<div id="peaks"><div class="abs" style="left:23.7px;top:4.4px;font-size:11.6px;line-height:14px;color:#262626">Peaks</div></div>
<div class="abs" style="left:0;top:390px;width:800px;height:68px;background:#626262"></div>
<div class="abs" style="left:1px;top:392px;width:798px;height:23px;background:#121212"></div>
<div class="abs" style="left:1px;top:417px;width:798px;height:18px;background:#000"></div>
<div class="abs" style="left:1px;top:437px;width:798px;height:18px;background:#000"></div>
<div class="abs" style="left:0;top:455px;width:800px;height:3px;background:linear-gradient(#3c3c3c,#8a8a8a)"></div>
<div class="abs" style="left:200px;top:392px;width:1px;height:63px;background:#6a6a6a"></div>
<div class="abs" style="left:400px;top:392px;width:1px;height:63px;background:#6a6a6a"></div>
<div class="abs" style="left:600px;top:392px;width:1px;height:63px;background:#6a6a6a"></div>
<div class="th" style="left:3px">Add</div>
<div class="th" style="left:203px">P1</div>
<div class="th" style="left:403px">P2</div>
<div class="th" style="left:603px">P3</div>
<div class="td r2" style="left:3px">Frequency (kHz)</div>
<div class="td r2" style="left:203px"><span class="dg">4.9957</span></div>
<div class="td r2" style="left:403px"><span class="dg">9.9914</span></div>
<div class="td r2" style="left:603px"><span class="dg">16.2145</span></div>
<div class="td r3" style="left:3px">Power (dBm)</div>
<div class="td r3" style="left:203px"><span class="dg">26.9860</span></div>
<div class="td r3" style="left:403px"><span class="dg">25.4926</span></div>
<div class="td r3" style="left:603px"><span class="dg">-32.5701</span></div>
<div id="status">
<div class="st" style="left:6px">Stopped</div>
<div class="st" style="left:90px">ΔT=46.4399 ms</div>
<div class="st" style="left:173px">Samples/Update=2048</div>
<div class="st" style="left:290px">VBW=22.0500 kHz</div>
<div class="st" style="left:388px">RBW=21.5332 Hz</div>
<div class="st" style="left:481px">Sample Rate=44.1000 kHz</div>
<div class="st" style="left:617px">Updates=4307</div>
<div class="st" style="left:694px">T=199.9935</div>
<svg class="abs" style="left:0;top:0" width="800" height="21" viewBox="0 458 800 21">
<circle cx="766.7" cy="463.6" r="1.3" fill="#3a3a3a"/><circle cx="766.7" cy="469" r="1.3" fill="#3a3a3a"/><circle cx="766.7" cy="474.4" r="1.3" fill="#3a3a3a"/>
<path d="M786.0,465.2 L795.4,465.2 L790.7,470.8 Z" fill="#8a8a8a"/>
<rect x="785.2" y="471.9" width="10.6" height="1.5" fill="#8a8a8a"/>
<path d="M795.5,479 L800,474.5 L800,479 Z" fill="#f6f6f6"/><path d="M0,474.5 L4.5,479 L0,479 Z" fill="#f6f6f6"/>
</svg>
</div>
</body></html>
